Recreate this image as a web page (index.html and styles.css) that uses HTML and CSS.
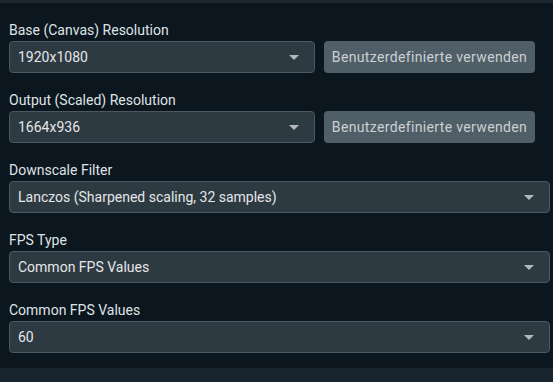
FILE: index.html
```html
<!DOCTYPE html>
<html lang="en">
<head>
  <meta charset="UTF-8">
  <title>Video Settings</title>
  <link rel="stylesheet" href="styles.css">
</head>
<body>
  <div class="top-bar"></div>

  <div class="settings">
    <div class="field">
      <label>Base (Canvas) Resolution</label>
      <div class="row">
        <div class="combo short">
          <span>1920x1080</span>
          <span class="arrow"></span>
        </div>
        <button class="custom">Benutzerdefinierte verwenden</button>
      </div>
    </div>

    <div class="field">
      <label>Output (Scaled) Resolution</label>
      <div class="row">
        <div class="combo short">
          <span>1664x936</span>
          <span class="arrow"></span>
        </div>
        <button class="custom">Benutzerdefinierte verwenden</button>
      </div>
    </div>

    <div class="field">
      <label>Downscale Filter</label>
      <div class="combo">
        <span>Lanczos (Sharpened scaling, 32 samples)</span>
        <span class="arrow"></span>
      </div>
    </div>

    <div class="field">
      <label>FPS Type</label>
      <div class="combo">
        <span>Common FPS Values</span>
        <span class="arrow"></span>
      </div>
    </div>

    <div class="field">
      <label>Common FPS Values</label>
      <div class="combo">
        <span>60</span>
        <span class="arrow"></span>
      </div>
    </div>
  </div>

  <div class="bottom-bar"></div>
</body>
</html>
```

FILE: styles.css
```css
body {
  margin: 0;
  height: 382px;
  overflow: hidden;
  background: #0c161e;
  font-family: Roboto, "Noto Sans", sans-serif;
  font-size: 14px;
  color: #dfe3e6;
}
.top-bar {
  height: 3px;
  background: #1c2730;
}
.settings {
  padding: 19px 3px 0 9px;
  display: flex;
  flex-direction: column;
  gap: 19px;
}
.field label {
  display: block;
  line-height: 16px;
  margin-bottom: 3px;
}
.row {
  display: flex;
  gap: 9px;
}
.combo {
  height: 32px;
  box-sizing: border-box;
  display: flex;
  align-items: center;
  justify-content: space-between;
  padding: 0 15px 0 8px;
  background: #2e3a42;
  border: 1px solid #4b5861;
  border-radius: 4px;
  color: #e4e6e8;
}
.combo.short {
  width: 306px;
}
.arrow {
  width: 0;
  height: 0;
  border-left: 5px solid transparent;
  border-right: 5px solid transparent;
  border-top: 5px solid #b4b8bb;
}
.custom {
  width: 211px;
  height: 32px;
  border: none;
  border-radius: 4px;
  background: #505e67;
  color: #cbd0d3;
  font-family: inherit;
  font-size: 14px;
  letter-spacing: 0.35px;
  padding: 0;
}
.bottom-bar {
  margin-top: 15px;
  height: 20px;
  background: #18242d;
}
```
